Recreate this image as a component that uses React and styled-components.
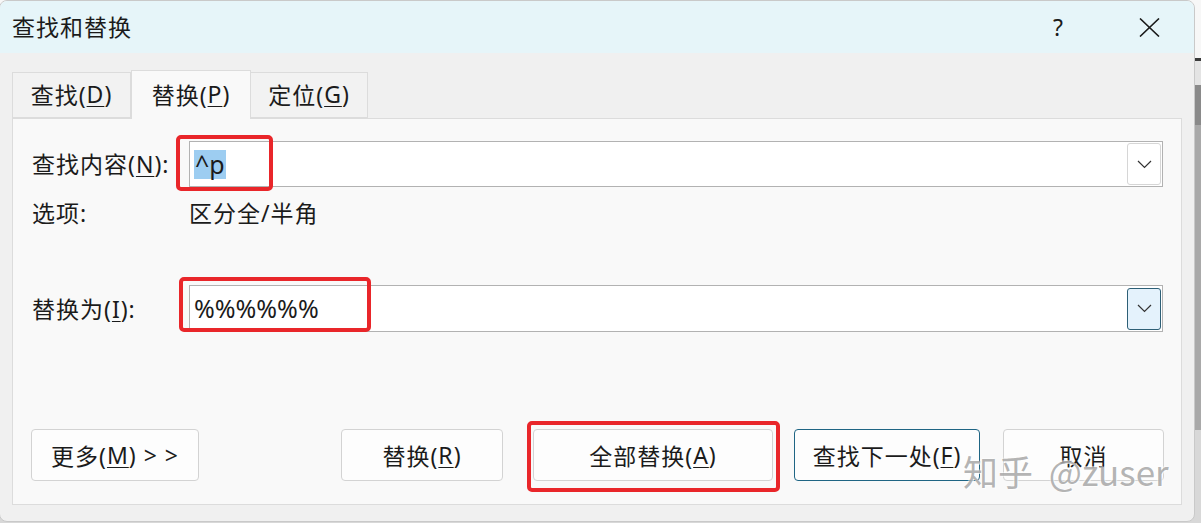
import React from "react";
import styled, { createGlobalStyle } from "styled-components";

const Global = createGlobalStyle`
  html, body { margin: 0; padding: 0; }
  body {
    width: 1201px;
    height: 523px;
    overflow: hidden;
    font-family: "Noto Sans", "Noto Sans CJK SC", sans-serif;
    background: linear-gradient(
      to bottom,
      #f7f7f7 0px, #f7f7f7 58px,
      #3a3a3a 58px, #3a3a3a 61px,
      #e4e4e4 61px, #e4e4e4 85px,
      #8a8a8a 85px, #8a8a8a 125px,
      #a9a9a9 125px, #a9a9a9 430px,
      #d8d8d8 430px
    );
  }
`;

const Window = styled.div`
  position: relative;
  width: 1196px;
  height: 522px;
  margin-left: -1px;
  box-sizing: border-box;
  background: #f0f0f0;
  border: 1px solid #c9c9c9;
  border-radius: 8px;
  overflow: hidden;
  display: flex;
  flex-direction: column;
  color: #1b1b1b;
`;

const TitleBar = styled.div`
  height: 52px;
  flex: none;
  background: #e6f5f9;
  display: flex;
  align-items: center;
  padding-left: 12px;
`;

const Title = styled.div`
  font-family: "Noto Sans CJK SC", sans-serif;
  font-size: 23px;
  letter-spacing: 1px;
  flex: 1;
  line-height: 30px;
  margin-top: -2px;
`;

const TitleButton = styled.div`
  width: 46px;
  height: 40px;
  display: flex;
  align-items: center;
  justify-content: center;
  font-size: 23px;
  color: #1b1b1b;
  margin-right: ${(p) => p.$mr || 0}px;
`;

const TabRow = styled.div`
  display: flex;
  align-items: flex-end;
  height: 48px;
  margin-top: 17px;
  padding-left: 12px;
  flex: none;
`;

const Tab = styled.div`
  box-sizing: border-box;
  width: ${(p) => p.$w}px;
  height: ${(p) => (p.$active ? 49 : 46)}px;
  margin-bottom: ${(p) => (p.$active ? -1 : 0)}px;
  background: ${(p) => (p.$active ? "#f9f9f9" : "#f2f2f2")};
  border: 1px solid #dcdcdc;
  border-bottom: ${(p) => (p.$active ? "none" : "1px solid #dcdcdc")};
  border-left: ${(p) => (p.$first || p.$active ? "1px solid #dcdcdc" : "none")};
  position: relative;
  z-index: ${(p) => (p.$active ? 2 : 1)};
  display: flex;
  align-items: center;
  justify-content: center;
  font-size: 23px;
  letter-spacing: 1px;
  padding-bottom: 2px;
`;

const Key = styled.span`
  text-decoration: underline;
  text-underline-offset: 3px;
  text-decoration-thickness: 1px;
`;

const Panel = styled.div`
  position: relative;
  box-sizing: border-box;
  margin: 0 12px;
  height: 387px;
  background: #f9f9f9;
  border: 1px solid #dcdcdc;
  padding: 22px 18px 0 19px;
  display: flex;
  flex-direction: column;
`;

const Row = styled.div`
  display: flex;
  align-items: center;
  height: ${(p) => p.$h}px;
  margin-top: ${(p) => p.$mt || 0}px;
`;

const Label = styled.div`
  width: 157px;
  flex: none;
  font-size: 23px;
  letter-spacing: 1px;
  line-height: 30px;
  white-space: nowrap;
`;

const Value = styled.div`
  font-size: 23px;
  letter-spacing: 1px;
  line-height: 30px;
`;

const ComboBox = styled.div`
  position: relative;
  flex: 1;
  height: 100%;
  box-sizing: border-box;
  background: #ffffff;
  border: 1px solid #b2b2b2;
  display: flex;
  align-items: center;
  padding: 0 1px 0 4px;
`;

const ComboText = styled.div`
  flex: 1;
  font-size: 25px;
  line-height: 29px;
  display: flex;
`;

const Selected = styled.span`
  background: #9dcdf1;
  padding: 0 1px;
`;

const DropButton = styled.div`
  width: 34px;
  height: 42px;
  box-sizing: border-box;
  border-radius: 3px;
  border: 1px solid ${(p) => (p.$focus ? "#2d5f76" : "#d6d6d6")};
  background: ${(p) => (p.$focus ? "#e4f2fc" : "#ffffff")};
  display: flex;
  align-items: center;
  justify-content: center;
`;

const Annotation = styled.div`
  position: absolute;
  left: ${(p) => p.$l}px;
  top: ${(p) => p.$t}px;
  width: ${(p) => p.$w}px;
  height: ${(p) => p.$h}px;
  box-sizing: border-box;
  border: 4px solid #e9262a;
  border-radius: 5px;
  pointer-events: none;
  z-index: 3;
`;

const ButtonRow = styled.div`
  display: flex;
  align-items: center;
  margin-top: 97px;
  margin-left: -1px;
  margin-right: -1px;
`;

const Button = styled.div`
  position: relative;
  box-sizing: border-box;
  width: ${(p) => p.$w}px;
  height: 52px;
  margin-left: ${(p) => p.$ml || 0}px;
  background: #fdfdfd;
  border: 1px solid ${(p) => (p.$default ? "#1f6584" : "#d3d3d3")};
  border-radius: 4px;
  display: flex;
  align-items: center;
  justify-content: center;
  font-size: 23px;
  letter-spacing: 1px;
  white-space: pre;
  padding-bottom: 1px;
`;

const Spacer = styled.div`
  flex: 1;
`;

const Watermark = styled.div`
  position: absolute;
  left: 963px;
  top: 448px;
  font-family: "Noto Sans CJK SC", "Noto Sans", sans-serif;
  font-size: 35px;
  line-height: 44px;
  color: rgba(160, 160, 160, 0.8);
  text-shadow: 1px 1px 0 rgba(255, 255, 255, 0.7), -1px -1px 0 rgba(255, 255, 255, 0.5);
  white-space: pre;
  pointer-events: none;
  z-index: 5;
`;

const Chevron = () => (
  <svg width="15" height="9" viewBox="0 0 15 9">
    <path d="M1 1 L7.5 7.5 L14 1" fill="none" stroke="#333" strokeWidth="1.2" />
  </svg>
);

const CloseIcon = () => (
  <svg width="21" height="19" viewBox="0 0 21 19">
    <path d="M1 0.5 L20 18.5 M20 0.5 L1 18.5" stroke="#1b1b1b" strokeWidth="1.6" fill="none" />
  </svg>
);

export default function App() {
  return (
    <>
      <Global />
      <Window>
        <TitleBar>
          <Title>查找和替换</Title>
          <TitleButton $mr={45}>?</TitleButton>
          <TitleButton $mr={22}>
            <CloseIcon />
          </TitleButton>
        </TitleBar>
        <TabRow>
          <Tab $w={119} $first>
            查找(<Key>D</Key>)
          </Tab>
          <Tab $w={120} $active>
            替换(<Key>P</Key>)
          </Tab>
          <Tab $w={117}>
            定位(<Key>G</Key>)
          </Tab>
        </TabRow>
        <Panel>
          <Row $h={46}>
            <Label>
              查找内容(<Key>N</Key>):
            </Label>
            <ComboBox>
              <ComboText>
                <Selected>^p</Selected>
              </ComboText>
              <DropButton>
                <Chevron />
              </DropButton>
              <Annotation $l={-14} $t={-7} $w={97} $h={56} />
            </ComboBox>
          </Row>
          <Row $h={30} $mt={11}>
            <Label>选项:</Label>
            <Value>区分全/半角</Value>
          </Row>
          <Row $h={47} $mt={57}>
            <Label>
              替换为(<Key>I</Key>):
            </Label>
            <ComboBox>
              <ComboText>%%%%%%</ComboText>
              <DropButton $focus>
                <Chevron />
              </DropButton>
              <Annotation $l={-11} $t={-9} $w={192} $h={55} />
            </ComboBox>
          </Row>
          <ButtonRow>
            <Button $w={168}>
              更多(<Key>M</Key>) &gt; &gt;
            </Button>
            <Spacer />
            <Button $w={162}>
              替换(<Key>R</Key>)
            </Button>
            <Button $w={240} $ml={30}>
              全部替换(<Key>A</Key>)
              <Annotation $l={-7} $t={-9} $w={253} $h={71} />
            </Button>
            <Button $w={186} $ml={21} $default>
              查找下一处(<Key>F</Key>)
            </Button>
            <Button $w={161} $ml={23}>
              取消
            </Button>
          </ButtonRow>
        </Panel>
        <Watermark>知乎  @zuser</Watermark>
      </Window>
    </>
  );
}
